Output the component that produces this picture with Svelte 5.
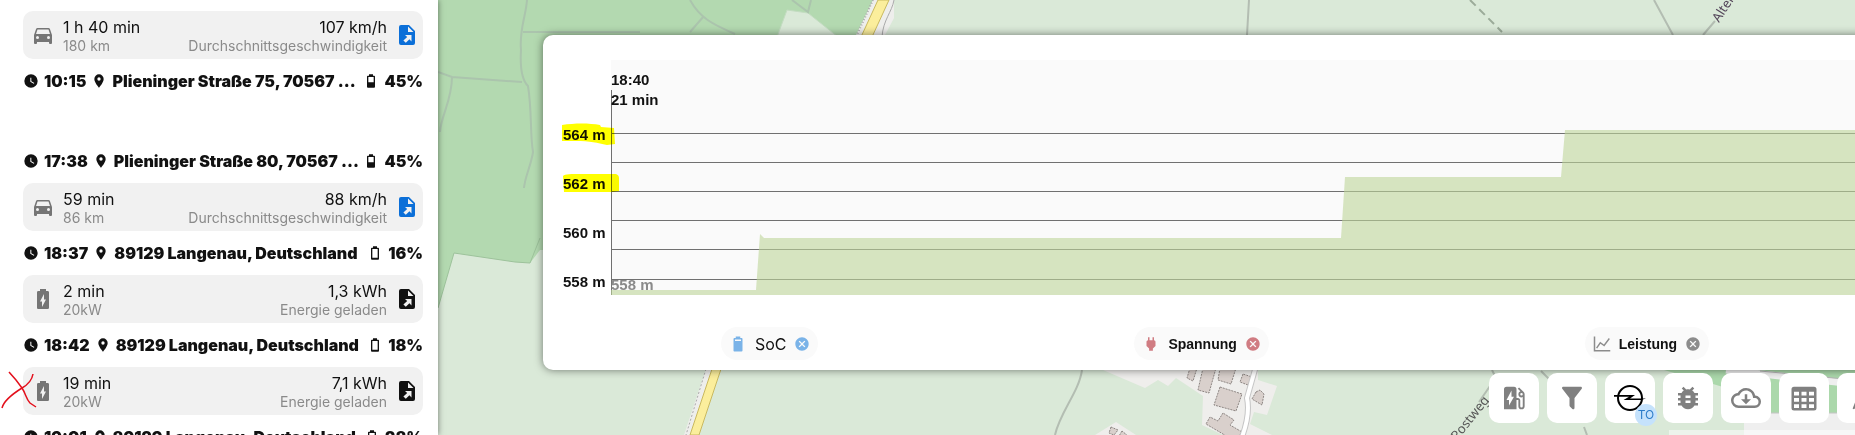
<script lang="ts">
  const icons = {
    car: 'M5,11L6.5,6.5H17.5L19,11M17.5,16A1.5,1.5 0 0,1 16,14.5A1.5,1.5 0 0,1 17.5,13A1.5,1.5 0 0,1 19,14.5A1.5,1.5 0 0,1 17.5,16M6.5,16A1.5,1.5 0 0,1 5,14.5A1.5,1.5 0 0,1 6.5,13A1.5,1.5 0 0,1 8,14.5A1.5,1.5 0 0,1 6.5,16M18.92,6C18.72,5.42 18.16,5 17.5,5H6.5C5.84,5 5.28,5.42 5.08,6L3,12V20A1,1 0 0,0 4,21H5A1,1 0 0,0 6,20V19H18V20A1,1 0 0,0 19,21H20A1,1 0 0,0 21,20V12L18.92,6Z',
    charge: 'M16.67,4H15V2H9V4H7.33A1.33,1.33 0 0,0 6,5.33V20.66C6,21.4 6.6,22 7.33,22H16.66A1.33,1.33 0 0,0 18,20.67V5.33C18,4.6 17.4,4 16.67,4M11,20V14.5H9L13,7V12.5H15',
    file: 'M6,2H14L20,8V20A2,2 0 0,1 18,22H6A2,2 0 0,1 4,20V4A2,2 0 0,1 6,2M13,3.5V9H18.5ZM10,12L12.2,14L8.4,17.4L10.8,19.8L14.4,16.2L16.5,18.5V12Z',
    clock: 'M12,2A10,10 0 0,0 2,12A10,10 0 0,0 12,22A10,10 0 0,0 22,12A10,10 0 0,0 12,2M16.2,16.2L11,13V7H12.5V12.2L17,14.9L16.2,16.2Z',
    marker: 'M12,11.5A2.5,2.5 0 0,1 9.5,9A2.5,2.5 0 0,1 12,6.5A2.5,2.5 0 0,1 14.5,9A2.5,2.5 0 0,1 12,11.5M12,2A7,7 0 0,0 5,9C5,14.25 12,22 12,22C12,22 19,14.25 19,9A7,7 0 0,0 12,2Z',
    battery40: 'M16,14H8V6H16M16.67,4H15V2H9V4H7.33A1.33,1.33 0 0,0 6,5.33V20.67C6,21.4 6.6,22 7.33,22H16.67A1.33,1.33 0 0,0 18,20.67V5.33C18,4.6 17.4,4 16.67,4Z',
    battery10: 'M16,19H8V6H16M16.67,4H15V2H9V4H7.33A1.33,1.33 0 0,0 6,5.33V20.67C6,21.4 6.6,22 7.33,22H16.67A1.33,1.33 0 0,0 18,20.67V5.33C18,4.6 17.4,4 16.67,4Z',
    battery90: 'M16,8H8V6H16M16.67,4H15V2H9V4H7.33A1.33,1.33 0 0,0 6,5.33V20.67C6,21.4 6.6,22 7.33,22H16.67A1.33,1.33 0 0,0 18,20.67V5.33C18,4.6 17.4,4 16.67,4Z',
    plug: 'M16,7V3H14V7H10V3H8V7H8C7,7 6,8 6,9V14.5L9.5,18V21H14.5V18L18,14.5V9C18,8 17,7 16,7Z',
    close: 'M12,2C17.53,2 22,6.47 22,12C22,17.53 17.53,22 12,22C6.47,22 2,17.53 2,12C2,6.47 6.47,2 12,2M15.59,7L12,10.59L8.41,7L7,8.41L10.59,12L7,15.59L8.41,17L12,13.41L15.59,17L17,15.59L13.41,12L17,8.41L15.59,7Z',
    line: 'M1,2H3V20H23V22H1ZM4,17L9.5,9L14.5,12.5L21,4L22.5,5.2L15,15.2L10,11.7L5.6,18Z',
    station: 'M19.77,7.23L19.78,7.22L16.06,3.5L15,4.56L17.11,6.67C16.17,7.03 15.5,7.93 15.5,9A2.5,2.5 0 0,0 18,11.5C18.36,11.5 18.69,11.42 19,11.29V18.5A1,1 0 0,1 18,19.5A1,1 0 0,1 17,18.5V14A2,2 0 0,0 15,12H14V5A2,2 0 0,0 12,3H6A2,2 0 0,0 4,5V21H14V13.5H15.5V18.5A2.5,2.5 0 0,0 18,21A2.5,2.5 0 0,0 20.5,18.5V9C20.5,8.31 20.22,7.68 19.77,7.23M18,10A1,1 0 0,1 17,9A1,1 0 0,1 18,8A1,1 0 0,1 19,9A1,1 0 0,1 18,10M8,18V13.5H6L10,6V11H12L8,18Z',
    filter: 'M14,12V19.88C14.04,20.18 13.94,20.5 13.71,20.71C13.32,21.1 12.69,21.1 12.3,20.71L10.29,18.7C10.06,18.47 9.96,18.16 10,17.87V12H9.97L4.21,4.62C3.87,4.19 3.95,3.56 4.38,3.22C4.57,3.08 4.78,3 5,3V3H19V3C19.22,3 19.43,3.08 19.62,3.22C20.05,3.56 20.13,4.19 19.79,4.62L14.03,12H14Z',
    bug: 'M14,12H10V10H14M14,16H10V14H14M20,8H17.19C16.74,7.22 16.12,6.55 15.37,6.04L17,4.41L15.59,3L13.42,5.17C12.96,5.06 12.5,5 12,5C11.5,5 11.04,5.06 10.59,5.17L8.41,3L7,4.41L8.62,6.04C7.88,6.55 7.26,7.22 6.81,8H4V10H6.09C6.04,10.33 6,10.66 6,11V12H4V14H6V15C6,15.34 6.04,15.67 6.09,16H4V18H6.81C7.85,19.79 9.78,21 12,21C14.22,21 16.15,19.79 17.19,18H20V16H17.91C17.96,15.67 18,15.34 18,15V14H20V12H18V11C18,10.66 17.96,10.33 17.91,10H20V8Z',
    cloud: 'M8,13H11V9H13V13H16L12,17L8,13M19.35,10.04C21.95,10.22 24,12.36 24,15A5,5 0 0,1 19,20H6A6,6 0 0,1 0,14C0,10.91 2.34,8.36 5.35,8.04C6.6,5.64 9.11,4 12,4C15.64,4 18.67,6.59 19.35,10.04M19,18A3,3 0 0,0 22,15C22,13.45 20.78,12.14 19.22,12.04L17.69,11.93L17.39,10.43C16.88,7.86 14.62,6 12,6C9.94,6 8.08,7.14 7.13,8.97L6.63,9.92L5.56,10.03C3.53,10.24 2,11.95 2,14A4,4 0 0,0 6,18H19Z',
    table: 'M4,3H20A2,2 0 0,1 22,5V20A2,2 0 0,1 20,22H4A2,2 0 0,1 2,20V5A2,2 0 0,1 4,3M4,7V10H8V7ZM10,7V10H14V7ZM16,7V10H20V7ZM4,12V15H8V12ZM10,12V15H14V12ZM16,12V15H20V12ZM4,17V20H8V17ZM10,17V20H14V17ZM16,17V20H20V17Z',
    arrow: 'M12,2L4.5,20.3L5.2,21L12,18L18.8,21L19.5,20.3Z',
  };

  const speed = 'Durchschnittsgeschwindigkeit';
  const langenau = '89129 Langenau, Deutschland';

  const entries = [
    { type: 'drive', duration: '1 h 40 min', detail: '180 km', value: '107 km/h', label: speed },
    { type: 'stop', time: '10:15', place: 'Plieninger Straße 75, 70567 ...', soc: 45, last: true },
    { type: 'stop', time: '17:38', place: 'Plieninger Straße 80, 70567 ...', soc: 45 },
    { type: 'drive', duration: '59 min', detail: '86 km', value: '88 km/h', label: speed },
    { type: 'stop', time: '18:37', place: langenau, soc: 16 },
    { type: 'charge', duration: '2 min', detail: '20kW', value: '1,3 kWh', label: 'Energie geladen' },
    { type: 'stop', time: '18:42', place: langenau, soc: 18 },
    { type: 'charge', duration: '19 min', detail: '20kW', value: '7,1 kWh', label: 'Energie geladen', crossed: true },
    { type: 'stop', time: '19:01', place: langenau, soc: 28 },
  ];

  const altitudes = ['564 m', '562 m', '560 m', '558 m'];
  const gridLines = [73, 102, 131, 160, 189, 219];

  let series = $state([
    { name: 'SoC', icon: icons.battery90, color: '#7ab3e8', strong: false },
    { name: 'Spannung', icon: icons.plug, color: '#d07c82', strong: true },
    { name: 'Leistung', icon: icons.line, color: '#8c8c8c', strong: true },
  ]);

  const tools = [
    { name: 'Ladestationen', icon: icons.station },
    { name: 'Filter', icon: icons.filter },
    { name: 'Fahrzeug', icon: '', badge: 'TO' },
    { name: 'Fehler melden', icon: icons.bug },
    { name: 'Herunterladen', icon: icons.cloud },
    { name: 'Tabelle', icon: icons.table },
    { name: 'Position', icon: icons.arrow },
  ];

  function removeSeries(name: string) {
    series = series.filter((s) => s.name !== name);
  }
</script>

{#snippet icon(path: string, size: number)}
  <svg class="icon" width={size} height={size} viewBox="0 0 24 24" aria-hidden="true">
    <path d={path} fill="currentColor" fill-rule="evenodd" />
  </svg>
{/snippet}

<div class="app">
  <aside class="sidebar">
    {#each entries as entry}
      {#if entry.type === 'stop'}
        <div class="stop" class:last={entry.last}>
          {@render icon(icons.clock, 16)}
          <span>{entry.time}</span>
          {@render icon(icons.marker, 16)}
          <span class="place">{entry.place}</span>
          {@render icon(entry.soc > 40 ? icons.battery40 : icons.battery10, 16)}
          <span>{entry.soc}%</span>
        </div>
      {:else}
        <div class="trip">
          {#if entry.crossed}
            <svg class="cross" width="38" height="40" viewBox="0 0 38 40" aria-hidden="true">
              <path d="M9,3L16,11L22,19C26,25 26,30 30,34L36,38M33,5C32,11 29,15 22,19C14,24 4,31 2,39" />
            </svg>
          {/if}
          <span class="kind">{@render icon(entry.type === 'drive' ? icons.car : icons.charge, 24)}</span>
          <div class="figures">
            <span class="main">{entry.duration}</span>
            <span class="sub">{entry.detail}</span>
          </div>
          <div class="figures right">
            <span class="main">{entry.value}</span>
            <span class="sub">{entry.label}</span>
          </div>
          <button class="open" class:drive={entry.type === 'drive'} type="button" aria-label="Details öffnen">
            {@render icon(icons.file, 24)}
          </button>
        </div>
      {/if}
    {/each}
  </aside>

  <main class="map">
    <svg class="tiles" viewBox="438 0 1417 435" preserveAspectRatio="xMinYMin slice" aria-hidden="true">
      <rect x="438" width="1417" height="435" fill="#dae9d8" />
      <path d="M438,0H874L855,40V250H540L530,263L515,262L454,253L438,308Z" fill="#b3d9b0" />
      <path d="M438,308L454,253L515,262L530,263L540,238" fill="none" stroke="#9dc29b" />
      <path d="M787,10L808,13L838,37H777Z" fill="#dae9d8" stroke="#c3dcc1" />
      <g class="track">
        <path d="M527,0C526,16 519,30 521,50C520,66 522,80 528,86C532,110 530,135 533,152C531,166 525,176 524,188M523,32H640M438,72L452,77L522,82M452,77C452,100 441,116 440,132M690,0C700,18 712,24 735,34M704,16L690,32M792,0L808,12L811,0" />
      </g>
      <path d="M873,0L855,37H884L894,18V0Z" fill="#eeeeec" />
      <path d="M878,0H889L872,37H861Z" fill="#fbee9c" stroke="#c9b95f" />
      <path d="M873,0L856,37" fill="none" stroke="#aaa" stroke-width="2" stroke-dasharray="1 2" />
      <path d="M894,0C892,12 883,20 882,37" fill="none" stroke="#aaa" />
      <path d="M706,369H720L699,435H684Z" fill="#eeeeec" />
      <path d="M712,369H721L699,435H690Z" fill="#fbee9c" stroke="#c9b95f" />
      <path d="M706,369L686,435" fill="none" stroke="#aaa" stroke-width="1" stroke-dasharray="2 2" />
      <g class="lane">
        <path d="M1249,0L1247,35M1654,0L1673,35M1715,21L1703,35M1082,370C1079,392 1060,412 1055,435M1490,386L1479,402M1541,371L1549,379M1584,427L1587,435M1492,370L1495,376" />
      </g>
      <path d="M1470,0L1502,32" fill="none" stroke="#9bab99" stroke-width="2" stroke-dasharray="8 5" />
      <path d="M1103,370L1145,388L1158,380L1168,386L1176,378L1203,396L1202,425L1223,435H1272L1250,424L1254,412L1267,415L1277,386L1258,380V370Z" fill="#efeeec" />
      <path d="M1095,435L1116,422L1136,435Z" fill="#efeeec" />
      <g class="houses">
        <path d="M1190,368L1187,378L1193,381L1197,368ZM1203,368L1198,390L1209,393L1216,368ZM1220,368L1218,380L1231,384L1236,368ZM1243,374L1240,382L1248,385L1252,377ZM1220,387L1214,405L1236,411L1242,394ZM1256,392L1252,399L1262,405L1264,394L1260,390ZM1223,413L1218,421L1210,417L1206,424L1228,437H1238L1242,432L1230,425L1234,420ZM1111,427L1109,433L1114,435L1118,430ZM1122,431L1119,436H1128Z" />
      </g>
      <path d="M1256,366L1247,398C1250,412 1246,426 1242,437" fill="none" stroke="#c6c6c6" stroke-width="6" />
      <path d="M1256,366L1247,398C1250,412 1246,426 1242,437" fill="none" stroke="#fff" stroke-width="4" />
      <path d="M1664,370L1713,384L1723,387L1744,415H1855V370Z" fill="#abd8ab" />
      <path d="M1726,370L1780,376L1855,384" fill="none" stroke="#efefef" stroke-width="7" />
      <path d="M1760,371L1855,380" fill="none" stroke="#b4b4b4" />
      <path d="M1744,413H1855V435H1744Z" fill="#efefef" />
      <path d="M1744,413H1855" stroke="#c4c4c4" />
      <rect x="1669" y="430" width="186" height="5" fill="#fff" opacity="0.5" />
      <text x="1719" y="23" transform="rotate(-57 1719 23)" fill="#54465a">Alter</text>
      <text x="1457" y="441" transform="rotate(-51 1457 441)" fill="#555">Postweg</text>
    </svg>

    <div class="overlay">
      <section class="panel">
        <div class="chart">
          <ul class="axis">
            {#each altitudes as altitude}
              <li>{altitude}</li>
            {/each}
          </ul>
          <div class="plot">
            <svg class="graph" viewBox="0 0 1256 235" preserveAspectRatio="none" aria-hidden="true">
              {#each gridLines as y}
                <rect x="0" {y} width="1256" height="1" fill="#707070" />
              {/each}
              <rect x="0" y="30" width="1" height="205" fill="#707070" />
              <path
                d="M0,230H145L149,174L153,178H730L734,117H950L954,70H1256V235H0Z"
                fill="#bed599"
                fill-opacity="0.6"
              />
            </svg>
            <div class="cursor">
              <span>18:40</span>
              <span>21 min</span>
            </div>
            <span class="low">558 m</span>
          </div>
          <svg class="mark" width="60" height="80" viewBox="0 0 60 80" aria-hidden="true">
            <path d="M1,5C14,3 28,3 39,5L40,7L53,8L54,24L46,25C36,23 30,21 14,21H1ZM2,56C4,54 10,54 20,54H55Q58,55 58,58V71L52,72H3Z" />
          </svg>
        </div>

        <div class="legend">
          {#each series as item (item.name)}
            <div class="chip" class:strong={item.strong}>
              <span style:color={item.color}>{@render icon(item.icon, 18)}</span>
              <span>{item.name}</span>
              <button
                type="button"
                aria-label={`${item.name} entfernen`}
                style:color={item.color}
                onclick={() => removeSeries(item.name)}
              >
                {@render icon(icons.close, 16)}
              </button>
            </div>
          {/each}
        </div>
      </section>

      <nav class="toolbar">
        {#each tools as tool}
          <button class="tool" type="button" aria-label={tool.name}>
            {#if tool.icon}
              {@render icon(tool.icon, 30)}
            {:else}
              <svg class="icon" width="32" height="30" viewBox="0 0 32 30" aria-hidden="true">
                <circle cx="16" cy="15" r="12" fill="none" stroke="#000" stroke-width="2" />
                <path d="M0,12H21L16,15.5H32L27,17H9.5L15,13.8H0Z" fill="#000" />
              </svg>
            {/if}
            {#if tool.badge}
              <span class="badge">{tool.badge}</span>
            {/if}
          </button>
        {/each}
      </nav>
    </div>
  </main>
</div>

<style>
  :global(body) {
    margin: 0;
  }

  .app {
    display: flex;
    height: 100vh;
    overflow: hidden;
    font-family: Inter, 'Liberation Sans', sans-serif;
    color: #111;
  }

  button {
    border: none;
    padding: 0;
    background: none;
    cursor: pointer;
  }

  .icon {
    display: block;
    flex: none;
  }

  .sidebar {
    position: relative;
    z-index: 1;
    box-sizing: border-box;
    flex: none;
    width: 438px;
    padding: 11px 15px 0 23px;
    background: #fff;
    box-shadow: 0 0 6px rgba(0, 0, 0, 0.5);
  }

  .trip {
    position: relative;
    box-sizing: border-box;
    display: flex;
    align-items: center;
    height: 48px;
    padding: 0 4px 0 8px;
    border-radius: 10px;
    background: #f1f1f1;
  }

  .kind {
    margin-right: 8px;
    color: #757575;
  }

  .figures {
    display: grid;
    padding-top: 2px;
  }

  .figures.right {
    margin-left: auto;
    margin-right: 8px;
    text-align: right;
  }

  .main {
    font-size: 16px;
    line-height: 20px;
  }

  .sub {
    font-size: 14px;
    line-height: 18px;
    color: #8a8a8a;
  }

  .open {
    color: #111;
  }

  .open.drive {
    color: #0b6fd8;
  }

  .cross {
    position: absolute;
    left: -23px;
    top: 2px;
    fill: none;
    stroke: #e3101c;
    stroke-width: 1.5;
  }

  .stop {
    display: flex;
    align-items: center;
    gap: 5px;
    height: 44px;
    font-size: 16px;
    font-weight: 900;
    white-space: nowrap;
  }

  .stop.last {
    margin-bottom: 36px;
  }

  .place {
    flex: 1;
    min-width: 0;
  }

  .map {
    position: relative;
    flex: 1;
    min-width: 0;
  }

  .tiles {
    position: absolute;
    inset: 0;
    width: 100%;
    height: 100%;
    font: 13px 'Noto Sans', sans-serif;
  }

  .track {
    fill: none;
    stroke: #abc4ad;
    stroke-width: 2;
  }

  .lane {
    fill: none;
    stroke: #b3bdb2;
    stroke-width: 2;
  }

  .houses {
    fill: #d9d0cc;
    stroke: #8d8683;
    stroke-dasharray: 2 1;
  }

  .overlay {
    position: relative;
    margin-right: -32px;
    padding: 35px 0 0 105px;
  }

  .panel {
    padding: 25px 20px 10px;
    border-radius: 10px;
    background: #fff;
    box-shadow: 0 0 8px rgba(0, 0, 0, 0.5);
  }

  .chart {
    position: relative;
    display: flex;
    font: bold 15px/20px 'Liberation Sans', sans-serif;
  }

  .axis {
    display: grid;
    grid-template-rows: repeat(3, 49px) 20px;
    align-content: start;
    flex: none;
    width: 48px;
    margin: 0;
    padding: 65px 0 0;
    list-style: none;
  }

  .plot {
    position: relative;
    flex: 1;
    height: 235px;
    background: #fafafa;
  }

  .graph {
    display: block;
    width: 100%;
    height: 100%;
  }

  .cursor {
    position: absolute;
    left: 0;
    top: 10px;
    display: grid;
  }

  .low {
    position: absolute;
    left: 0;
    bottom: 0;
    color: #8a8a8a;
  }

  .mark {
    position: absolute;
    left: -2px;
    top: 60px;
    fill: #ffff00;
    mix-blend-mode: multiply;
  }

  .legend {
    display: flex;
    justify-content: space-around;
    padding-top: 32px;
  }

  .chip {
    display: flex;
    align-items: center;
    gap: 8px;
    height: 33px;
    padding: 0 8px;
    border-radius: 17px;
    background: #fafafa;
    font-size: 16px;
  }

  .chip.strong {
    font: bold 14px 'Liberation Sans', sans-serif;
  }

  .toolbar {
    display: flex;
    justify-content: flex-end;
    gap: 8px;
    padding-top: 3px;
  }

  .tool {
    position: relative;
    display: flex;
    align-items: center;
    justify-content: center;
    width: 50px;
    height: 50px;
    border-radius: 10px;
    background: #fff;
    color: #808080;
  }

  .badge {
    position: absolute;
    right: -2px;
    bottom: -3px;
    width: 22px;
    height: 22px;
    border-radius: 50%;
    background: #c5e2fc;
    color: #2d7cc9;
    font: 12px/22px Inter, sans-serif;
    text-align: center;
  }
</style>
